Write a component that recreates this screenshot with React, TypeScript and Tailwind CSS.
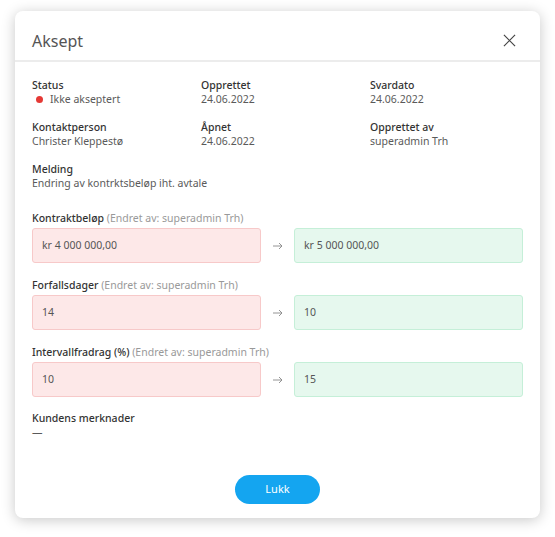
const font = { fontFamily: '"Noto Sans", "Liberation Sans", sans-serif' };

export default function App() {
  return (
    <div className="min-h-[537px] w-[555px] bg-white pt-[11px] pl-[15px]" style={font}>
      <div className="w-[525px] h-[507px] rounded-lg bg-white shadow-[0_2px_14px_rgba(0,0,0,0.22)] flex flex-col">

        {/* Header */}

        <div className="flex h-[51px] items-center justify-between border-b-2 border-[#ececec] pl-[17px] pr-[24px] pt-[10px]">
          <h2 className="text-[16px] text-[#555]">Aksept</h2>
          <svg width="13" height="13" viewBox="0 0 14 14" fill="none" stroke="#444" strokeWidth="1.3">
            <path d="M1 1L13 13M13 1L1 13" />
          </svg>
        </div>

        {/* Body */}

        <div className="flex flex-1 flex-col px-[17px] pt-[16px]">

          <div className="grid grid-cols-[169px_169px_1fr] gap-y-[14px]">
            <Field label="Status">
              <span className="flex items-center gap-[7px] pl-[4px]">
                <span className="h-[7px] w-[7px] rounded-full bg-[#e53935]" />
                Ikke akseptert
              </span>
            </Field>
            <Field label="Opprettet">24.06.2022</Field>
            <Field label="Svardato">24.06.2022</Field>
            <Field label="Kontaktperson">Christer Kleppestø</Field>
            <Field label="Åpnet">24.06.2022</Field>
            <Field label="Opprettet av">superadmin Trh</Field>
            <div className="col-span-3">
              <Field label="Melding">Endring av kontrktsbeløp iht. avtale</Field>
            </div>
          </div>

          <div className="mt-[21px] flex flex-col gap-[15px]">
            <Change label="Kontraktbeløp" from="kr 4 000 000,00" to="kr 5 000 000,00" />
            <Change label="Forfallsdager" from="14" to="10" />
            <Change label="Intervallfradrag (%)" from="10" to="15" />
          </div>

          <div className="mt-[14px]">
            <Field label="Kundens merknader">—</Field>
          </div>

          <div className="mt-[36px] flex justify-center">
            <button className="h-[29px] w-[85px] rounded-full bg-[#14a5f0] text-[11px] text-white">
              Lukk
            </button>
          </div>

        </div>
      </div>
    </div>
  );
}

interface FieldProps {
  label: string;
  children: React.ReactNode;
}

function Field({ label, children }: FieldProps) {
  return (
    <div className="text-[10.5px] leading-[14px]">
      <div className="font-medium text-[#333]">{label}</div>
      <div className="text-[#5a5a5a]">{children}</div>
    </div>
  );
}

interface ChangeProps {
  label: string;
  from: string;
  to: string;
}

function Change({ label, from, to }: ChangeProps) {
  return (
    <div>
      <div className="text-[10.5px] leading-[14px]">
        <span className="font-medium text-[#333]">{label}</span>{" "}
        <span className="text-[#999]">(Endret av: superadmin Trh)</span>
      </div>
      <div className="mt-[3px] flex items-center">
        <div className="flex h-[35px] w-[229px] items-center rounded-[3px] border border-[#f7c9c9] bg-[#fde8e8] px-[9px] text-[10.5px] text-[#555]">
          {from}
        </div>
        <div className="flex w-[33px] justify-center">
          <svg width="10" height="8" viewBox="0 0 10 8" fill="none" stroke="#888" strokeWidth="0.9">
            <path d="M0 4H9M6 1L9 4L6 7" />
          </svg>
        </div>
        <div className="flex h-[35px] flex-1 items-center rounded-[3px] border border-[#c5efd8] bg-[#e6f8ee] px-[9px] text-[10.5px] text-[#555]">
          {to}
        </div>
      </div>
    </div>
  );
}
